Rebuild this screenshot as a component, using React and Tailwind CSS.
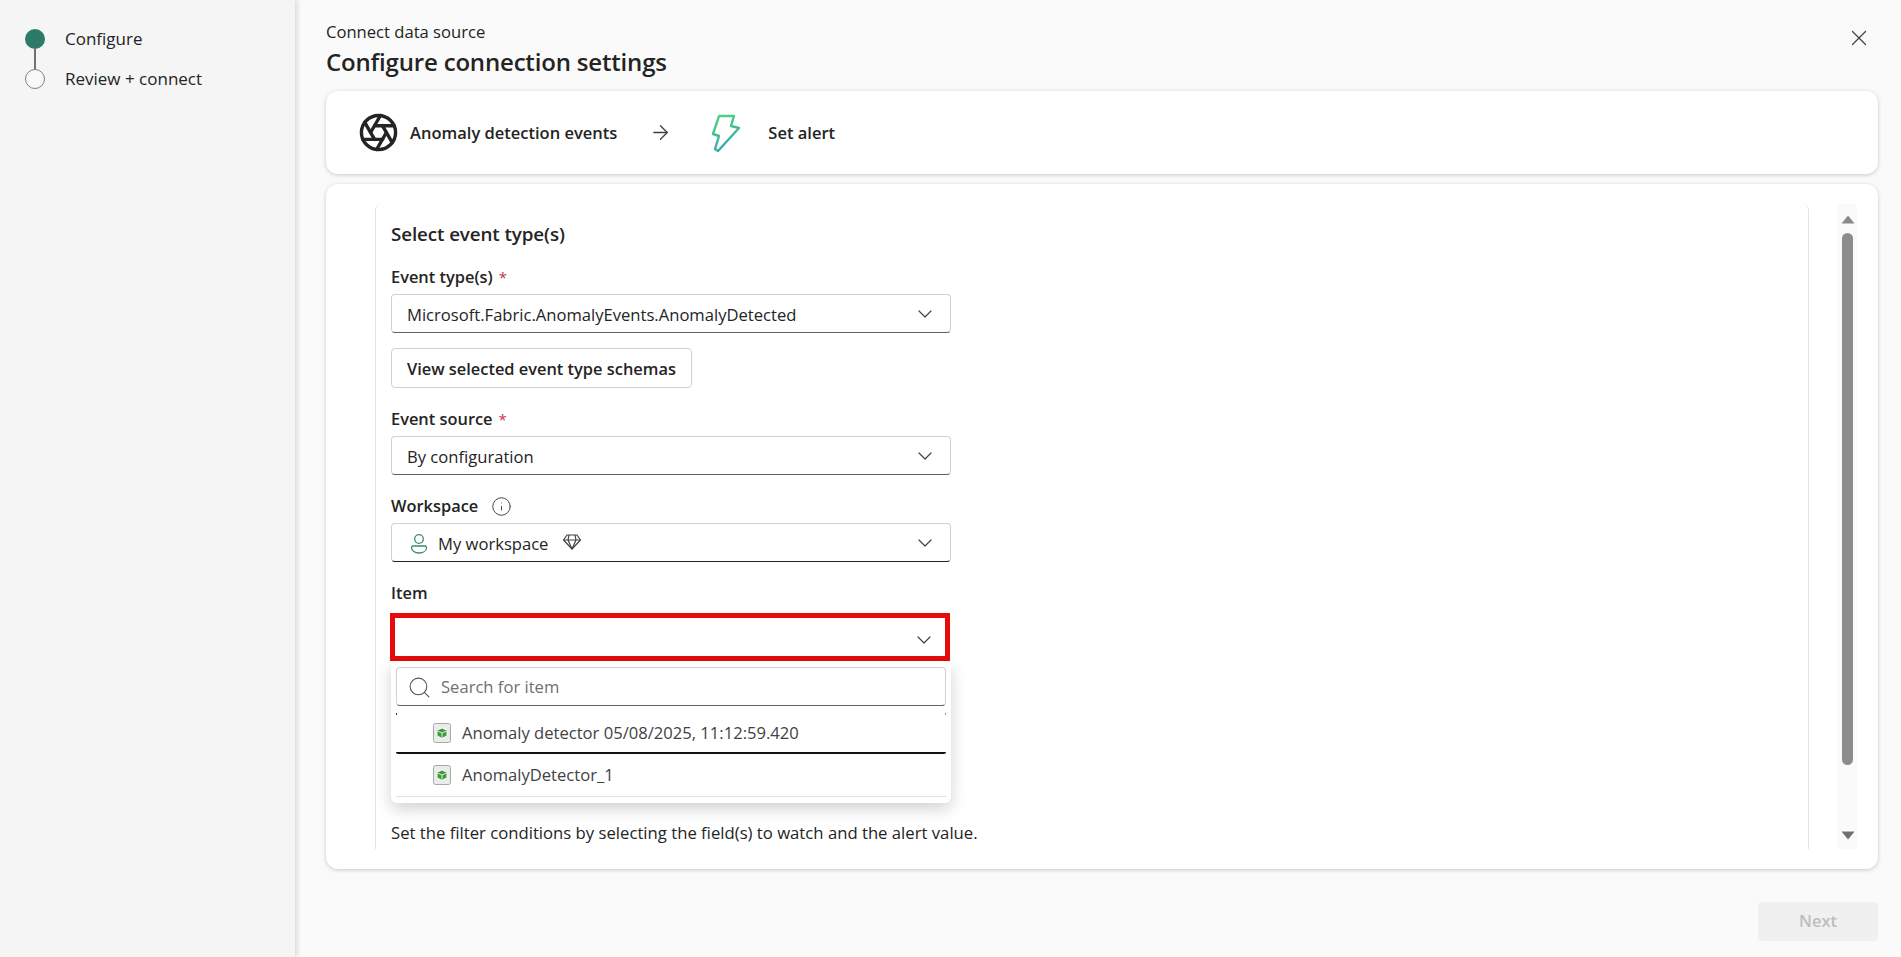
import React from "react";
import { Aperture, ArrowRight, ChevronDown, Info, Search, X } from "lucide-react";

const Chevron = () => <ChevronDown size={24} strokeWidth={1.2} className="text-[#424242]" />;

const Label = ({ children, req }) => (
  <div className="text-[16.4px] leading-[22px] font-semibold text-[#242424] flex gap-[6px]">
    <span>{children}</span>
    {req && <span className="text-[#c4314b] font-normal text-[15px]">*</span>}
  </div>
);

const Select = ({ children, dark }) => (
  <div className={`h-[39px] mt-[6px] w-[560px] bg-white rounded-[4px] border border-[#d1d1d1] border-b ${dark ? "border-b-[#242424]" : "border-b-[#616161]"} pl-[15px] pr-[13px] pt-[1px] flex items-center justify-between text-[16.6px] text-[#242424]`}>
    <div className="flex items-center pt-[2px]">{children}</div>
    <Chevron />
  </div>
);

const ItemIcon = () => (
  <svg width="18" height="20" viewBox="0 0 18 20" className="shrink-0">
    <rect x="0.5" y="0.5" width="17" height="19" rx="2" fill="#e9ece9" stroke="#a9a9a9" />
    <circle cx="9" cy="10" r="5.5" fill="#fbfbfb" />
    <path d="M9 5.5 13.5 7.5v5L9 15 4.5 12.5v-5z" fill="#3f9a3f" />
    <path d="M4.5 8 9 10l4.5-2" fill="none" stroke="#ffffff" strokeWidth="0.8" />
    <path d="M9 10v5" stroke="#ffffff" strokeWidth="0.8" />
  </svg>
);

const Step = ({ active, children }) => (
  <div className="flex items-center h-[20px]">
    {active ? (
      <div className="w-[20px] h-[20px] rounded-full bg-[#2c7a67]" />
    ) : (
      <div className="w-[20px] h-[20px] rounded-full border border-[#808080] bg-white/40" />
    )}
    <span className="ml-[20px] text-[17px] text-[#242424] whitespace-nowrap">{children}</span>
  </div>
);

export default function App() {
  return (
    <div className="flex h-[957px] w-[1901px] overflow-hidden bg-[#fafafa] text-[#242424] font-['Open_Sans','Noto_Sans',sans-serif]">
      <aside className="w-[295px] shrink-0 bg-[#f5f5f5] shadow-[2px_0_5px_rgba(0,0,0,0.14)] pl-[25px] pt-[29px]">
        <Step active>Configure</Step>
        <div className="w-[2px] h-[20px] ml-[9px] bg-[#707070]" />
        <Step>Review + connect</Step>
      </aside>

      <main className="flex-1 min-w-0 flex flex-col pl-[31px] pr-[23px] relative">
        <div className="pt-[21px] text-[16.6px] leading-[22px]">Connect data source</div>
        <h1 className="text-[24px] leading-[32px] font-semibold mt-[3px] text-[#242424] tracking-[-0.18px]">Configure connection settings</h1>
        <button className="absolute right-[29px] top-[25px] text-[#424242]"><X size={26} strokeWidth={1.1} /></button>

        <section className="mt-[13px] h-[83px] bg-white rounded-[12px] shadow-[0_1px_4px_rgba(0,0,0,0.2)] flex items-center pl-[32px] shrink-0">
          <Aperture size={41} strokeWidth={2} className="text-[#242424]" />
          <span className="ml-[11px] text-[16.5px] font-semibold pt-[2px]">Anomaly detection events</span>
          <ArrowRight size={23} strokeWidth={1.4} className="ml-[32px] text-[#424242]" />
          <svg width="30" height="40" viewBox="0 0 30 40" className="ml-[38px]">
            <defs>
              <linearGradient id="bolt" x1="0.2" y1="0" x2="0.6" y2="1">
                <stop offset="0" stopColor="#4fd47c" />
                <stop offset="1" stopColor="#36a3b8" />
              </linearGradient>
            </defs>
            <path d="M9 3H24L21 13L29 15L8 38L5 36L9 23L3 21Z" fill="none" stroke="url(#bolt)" strokeWidth="2.4" strokeLinejoin="round" />
          </svg>
          <span className="ml-[28px] text-[16.5px] font-semibold pt-[2px]">Set alert</span>
        </section>

        <section className="mt-[10px] h-[685px] bg-white rounded-[12px] shadow-[0_1px_4px_rgba(0,0,0,0.2)] pt-[20px] pl-[49px] pr-[20px] flex shrink-0">
          <div className="w-[1434px] h-[645px] overflow-hidden border-x border-[#e4e4e4] rounded-t-[6px] pl-[15px] pt-[18px]">
            <div className="text-[18.8px] leading-[24px] font-semibold tracking-[-0.1px]">Select event type(s)</div>
            <div className="mt-[20px]"><Label req>Event type(s)</Label></div>
            <Select>Microsoft.Fabric.AnomalyEvents.AnomalyDetected</Select>
            <button className="mt-[15px] h-[40px] px-[15px] pt-[3px] bg-white rounded-[4px] border border-[#d1d1d1] text-[16.4px] font-semibold block">View selected event type schemas</button>
            <div className="mt-[20px]"><Label req>Event source</Label></div>
            <Select>By configuration</Select>
            <div className="mt-[20px] flex items-center gap-[13px]">
              <Label>Workspace</Label>
              <Info size={21} strokeWidth={1.1} className="text-[#424242]" />
            </div>
            <Select dark>
              <svg width="20" height="22" viewBox="0 0 20 22" fill="none" stroke="#3a8a78" strokeWidth="1.3" className="ml-[2px]">
                <circle cx="10" cy="6" r="4.3" />
                <path d="M2.5 14.5a1.5 1.5 0 0 1 1.5-1.5h12a1.5 1.5 0 0 1 1.5 1.5c0 3.5-3.5 5.5-7.5 5.5s-7.5-2-7.5-5.5z" />
              </svg>
              <span className="ml-[9px]">My workspace</span>
              <svg width="20" height="18" viewBox="0 0 20 18" fill="none" stroke="#424242" strokeWidth="1.2" strokeLinejoin="round" className="ml-[14px] -mt-[4px]">
                <path d="M5 2h10l3.5 5L10 16 1.5 7z" />
                <path d="M1.5 7h17M7 2 6 7l4 9 4-9-1-5" />
              </svg>
            </Select>
            <div className="mt-[20px]"><Label>Item</Label></div>
            <div className="relative mt-[9px] w-[560px]">
              <div className="h-[48px] -ml-[1px] w-[560px] bg-white border-[5px] border-[#e60b0b] flex items-center justify-end pr-[9px] pt-[6px]">
                <Chevron />
              </div>
              <div className="absolute left-0 top-[48px] w-[560px] h-[142px] bg-white rounded-[6px] shadow-[0_6px_16px_rgba(0,0,0,0.18)] px-[5px] pt-[6px] z-10">
                <div className="h-[39px] rounded-[4px] border border-[#d1d1d1] border-b-[#616161] flex items-center pl-[10px] pt-[1px] text-[16.6px] text-[#707070]">
                  <Search size={25} strokeWidth={1} className="text-[#505050]" />
                  <span className="ml-[9px] pt-[1px]">Search for item</span>
                </div>
                <div className="relative mt-[7px] h-[41px] border-b-2 border-[#111111] rounded-b-[2px] flex items-center pl-[37px] text-[16.6px] text-[#424242]">
                  <span className="absolute left-0 top-0 w-[1px] h-[2px] bg-[#333333]" />
                  <span className="absolute right-0 top-0 w-[1px] h-[2px] bg-[#999999]" />
                  <ItemIcon />
                  <span className="ml-[11px] pt-[1px]">Anomaly detector 05/08/2025, 11:12:59.420</span>
                </div>
                <div className="h-[43px] border-b border-[#e0e0e0] flex items-center pl-[37px] text-[16.6px] text-[#424242]">
                  <ItemIcon />
                  <span className="ml-[11px] pt-[1px]">AnomalyDetector_1</span>
                </div>
              </div>
            </div>
            <div className="mt-[161px] text-[16.7px] leading-[22px] text-[#242424]">Set the filter conditions by selecting the field(s) to watch and the alert value.</div>
          </div>

          <div className="ml-[29px] w-[19px] h-[645px] bg-[#fafafa] flex flex-col items-center pt-[11px]">
            <svg width="14" height="9" viewBox="0 0 14 9"><path d="M7 0.5 13.5 8.5H0.5Z" fill="#8a8a8a" /></svg>
            <div className="w-[11px] h-[532px] mt-[9px] rounded-full bg-[#8c8c8c]" />
            <div className="flex-1" />
            <svg width="14" height="9" viewBox="0 0 14 9" className="mb-[9px]"><path d="M0.5 0.5H13.5L7 8.5Z" fill="#707070" /></svg>
          </div>
        </section>

        <div className="mt-[33px] flex justify-end">
          <button className="w-[120px] h-[39px] rounded-[4px] bg-[#f0f0f0] text-[#bdbdbd] text-[16.5px] font-semibold">Next</button>
        </div>
      </main>
    </div>
  );
}
